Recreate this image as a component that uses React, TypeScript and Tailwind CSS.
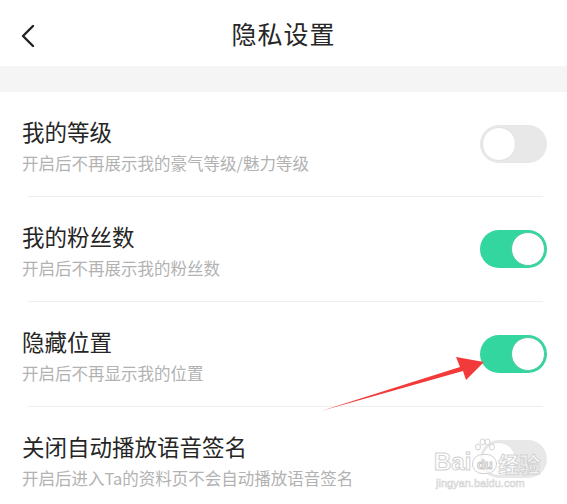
import React from 'react';

type Item = { title: string; desc: string; on: boolean };

const items: Item[] = [
  { title: '我的等级', desc: '开启后不再展示我的豪气等级/魅力等级', on: false },
  { title: '我的粉丝数', desc: '开启后不再展示我的粉丝数', on: true },
  { title: '隐藏位置', desc: '开启后不再显示我的位置', on: true },
  { title: '关闭自动播放语音签名', desc: '开启后进入Ta的资料页不会自动播放语音签名', on: false },
];

function Toggle({ on }: { on: boolean }) {
  return (
    <div
      className={
        on
          ? 'w-[67px] h-[38px] rounded-full bg-[#33d69f] flex items-center justify-end p-[2px] shrink-0'
          : 'w-[67px] h-[38px] rounded-full bg-[#e8e8e8] flex items-center justify-start p-[2px] shrink-0'
      }
    >
      <span
        className={
          on
            ? 'w-[34px] h-[34px] rounded-full bg-white border border-[#52c99f]'
            : 'w-[34px] h-[34px] rounded-full bg-white border border-[#e2e2e2]'
        }
      />
    </div>
  );
}

export default function App() {
  return (
    <div
      className="relative w-[567px] h-[504px] overflow-hidden bg-white"
      style={{ fontFamily: '"Noto Sans CJK SC", "Noto Sans", sans-serif' }}
    >
      {/* 顶栏 */}
      <div className="relative h-[66px] flex items-center justify-center">
        <svg className="absolute left-[19px] top-[24px]" width="18" height="24" viewBox="0 0 18 24">
          <path d="M14 2 L4 12 L14 22" fill="none" stroke="#222" strokeWidth="2.4" strokeLinecap="round" strokeLinejoin="round" />
        </svg>
        <span className="text-[25px] text-[#262626] leading-none tracking-[1px]">隐私设置</span>
      </div>
      <div className="h-[26px] bg-[#f5f5f5]" />

      {/* 设置列表 */}
      <div className="flex flex-col">
        {items.map((it, i) => (
          <div key={i} className="h-[105px] flex flex-col">
            <div className="flex-1 flex items-start justify-between pl-[22px] pr-[20px]">
              <div className="flex flex-col pt-[24px]">
                <span className="text-[22.5px] leading-[30px] text-[#262626]">{it.title}</span>
                <span className="mt-[6px] text-[16.5px] leading-[22px] text-[#b2b2b2]">{it.desc}</span>
              </div>
              <div className="pt-[33px]">
                <Toggle on={it.on} />
              </div>
            </div>
            <div className="h-px ml-[28px] mr-[24px] bg-[#efefef]" />
          </div>
        ))}
      </div>

      {/* 红色箭头 */}
      <svg className="absolute left-0 top-0 pointer-events-none" width="567" height="504" viewBox="0 0 567 504">
        <polygon points="321,411 460,367 456,357 484,362 466,380 463,371" fill="#f33a3a" />
      </svg>

      {/* 水印 */}
      <div className="absolute left-[434px] top-[438px] flex flex-col items-start pointer-events-none">
        <div className="flex items-end gap-[1px]">
          <span className="text-[24px] leading-none font-bold text-white/80 [-webkit-text-stroke:1px_#d2d2d2]" style={{ fontFamily: '"Liberation Sans", sans-serif' }}>
            Bai
          </span>
          <div className="flex flex-col items-center">
            <svg width="22" height="16" viewBox="0 0 22 16">
              <g fill="rgba(255,255,255,0.8)" stroke="#d2d2d2" strokeWidth="1">
                <ellipse cx="4" cy="9" rx="2.5" ry="3" />
                <ellipse cx="8.5" cy="4" rx="2.5" ry="3" />
                <ellipse cx="13.5" cy="4" rx="2.5" ry="3" />
                <ellipse cx="18" cy="9" rx="2.5" ry="3" />
              </g>
            </svg>
            <span className="w-[25px] h-[20px] rounded-full border border-[#d2d2d2] bg-white/70 flex items-center justify-center text-[13px] leading-none font-bold text-white [-webkit-text-stroke:1px_#c8c8c8]" style={{ fontFamily: '"Liberation Sans", sans-serif' }}>
              du
            </span>
          </div>
          <span className="text-[21px] leading-none font-bold text-white/80 [-webkit-text-stroke:1px_#d2d2d2]">经验</span>
        </div>
        <span className="mt-[4px] ml-[2px] text-[11px] leading-none text-white [-webkit-text-stroke:0.6px_#d2d2d2]" style={{ fontFamily: '"Liberation Sans", sans-serif' }}>
          jingyan.baidu.com
        </span>
      </div>
    </div>
  );
}
